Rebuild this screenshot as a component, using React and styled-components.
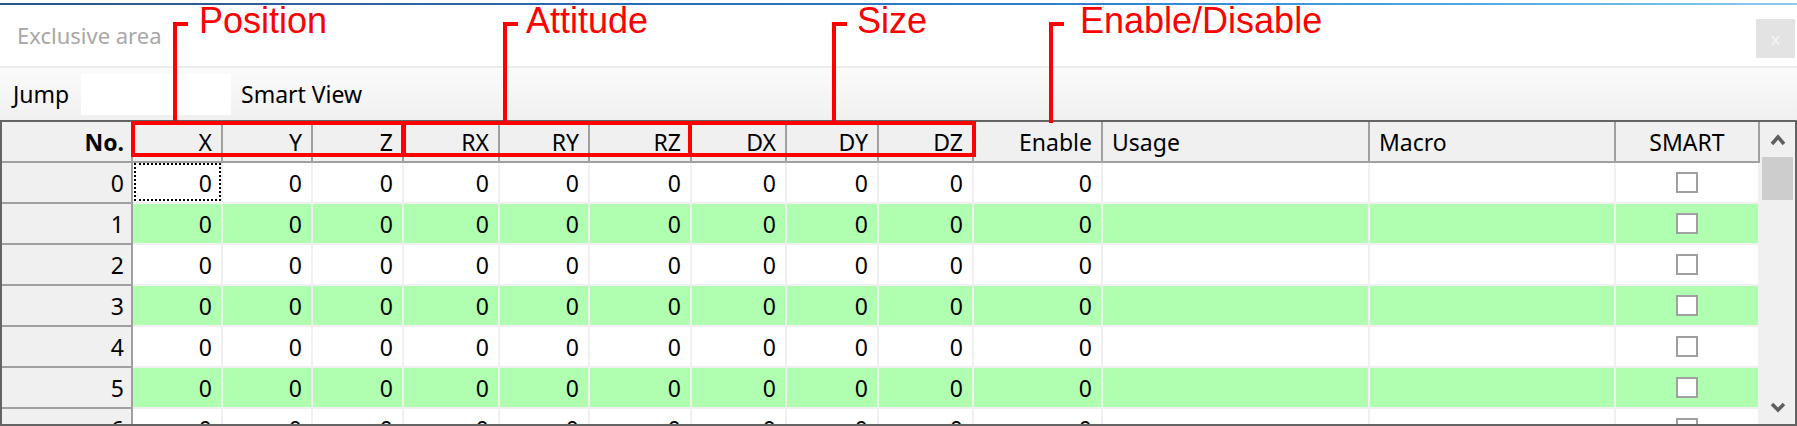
import React from 'react'
import styled, { createGlobalStyle } from 'styled-components'

const GlobalStyle = createGlobalStyle`
  html, body {
    margin: 0;
    padding: 0;
    background: #fff;
  }
  body {
    font-family: "Noto Sans", "Open Sans", sans-serif;
  }
`

const Window = styled.div`
  position: relative;
  width: 1797px;
  height: 426px;
  overflow: hidden;
  display: flex;
  flex-direction: column;
  background: #fff;
`
const TopLine = styled.div`
  height: 2px;
  margin-top: 3px;
  background: linear-gradient(90deg, #2b568a 0%, #2a6cb0 35%, #2f84cf 62%, #4aa6e2 80%, #8ccbee 100%);
`
const TitleBar = styled.div`
  height: 61px;
  display: flex;
  justify-content: space-between;
  align-items: flex-start;
`
const Title = styled.div`
  font-size: 22px;
  line-height: 30px;
  color: #a8a8a8;
  margin: 15px 0 0 17px;
`
const CloseButton = styled.div`
  width: 39px;
  height: 39px;
  margin: 14px 2px 0 0;
  background: #e3e3e3;
  color: #f6f6f6;
  font-size: 17px;
  display: flex;
  align-items: center;
  justify-content: center;
`
const Toolbar = styled.div`
  height: 54px;
  box-sizing: border-box;
  border-top: 2px solid #ececec;
  background: linear-gradient(#fbfbfb, #f0f0f0);
  display: flex;
  align-items: center;
  padding-left: 13px;
  font-size: 23px;
  color: #000;
`
const ToolLabel = styled.span`
  width: ${p => p.$w || 'auto'};
`
const JumpInput = styled.div`
  width: 150px;
  height: 41px;
  background: #fff;
  margin-right: 10px;
`
const GridFrame = styled.div`
  height: 306px;
  box-sizing: border-box;
  border: 2px solid #646464;
  display: flex;
`
const Table = styled.div`
  width: 1758px;
  display: grid;
  grid-template-columns: 131px 90px 90px 91px 96px 90px 102px 95px 92px 95px 129px 267px 246px 144px;
  grid-auto-rows: 41px;
  align-content: start;
  overflow: hidden;
  font-size: 23px;
  color: #000;
`
const HeaderCell = styled.div`
  background: #f0f0f0;
  border-right: 2px solid #a0a0a0;
  border-bottom: 2px solid #a0a0a0;
  display: flex;
  align-items: center;
  justify-content: ${p => p.$align === 'left' ? 'flex-start' : p.$align === 'center' ? 'center' : 'flex-end'};
  padding: ${p => p.$align === 'left' ? '0 0 0 9px' : p.$align === 'center' ? '0' : '0 9px 0 0'};
  font-weight: ${p => p.$bold ? 700 : 400};
  padding-right: ${p => p.$bold ? '7px' : undefined};
`
const RowHead = styled.div`
  background: #f0f0f0;
  border-right: 2px solid #a0a0a0;
  border-bottom: 2px solid #a0a0a0;
  display: flex;
  align-items: center;
  justify-content: flex-end;
  padding-right: 7px;
`
const Cell = styled.div`
  position: relative;
  background: ${p => p.$green ? '#b0ffb0' : '#fff'};
  border-right: 2px solid #f0f0f0;
  border-bottom: 2px solid #f0f0f0;
  display: flex;
  align-items: center;
  justify-content: ${p => p.$center ? 'center' : 'flex-end'};
  padding-right: ${p => p.$center ? '0' : '9px'};
  ${p => p.$focus && `
    &::after {
      content: '';
      position: absolute;
      left: 1px;
      top: 0;
      right: 0;
      bottom: 1px;
      border: 2px dotted #000;
    }
  `}
`
const CheckBox = styled.div`
  width: 22px;
  height: 21px;
  box-sizing: border-box;
  border: 2px solid #a0a0a0;
  background: #fff;
`
const ScrollBar = styled.div`
  width: 35px;
  background: #f0f0f0;
  display: flex;
  flex-direction: column;
`
const ScrollButton = styled.div`
  height: 35px;
  display: flex;
  align-items: center;
  justify-content: center;
  margin-top: ${p => p.$bottom ? 'auto' : '0'};
`
const Thumb = styled.div`
  height: 43px;
  margin: 0 2px;
  background: #cdcdcd;
`
const Note = styled.div`
  position: absolute;
  left: ${p => p.$x}px;
  top: 3px;
  font-family: "Liberation Sans", Arial, sans-serif;
  font-size: 36px;
  line-height: 36px;
  color: #ff0000;
  white-space: nowrap;
`
const Bracket = styled.div`
  position: absolute;
  left: ${p => p.$x}px;
  top: 22px;
  width: 15px;
  height: ${p => p.$h}px;
  box-sizing: border-box;
  border-left: 4px solid #ff0000;
  border-top: 4px solid #ff0000;
`
const GroupBox = styled.div`
  position: absolute;
  left: ${p => p.$x}px;
  top: 121px;
  width: ${p => p.$w}px;
  height: 36px;
  box-sizing: border-box;
  border: 4px solid #ff0000;
`

const Chevron = ({ down }) => (
  <svg width="16" height="12" viewBox="0 0 16 12">
    <polyline
      points={down ? '2,3 8,9 14,3' : '2,10 8,3 14,10'}
      fill="none"
      stroke="#5f5f5f"
      strokeWidth="3.5"
    />
  </svg>
)

const numCols = ['X', 'Y', 'Z', 'RX', 'RY', 'RZ', 'DX', 'DY', 'DZ', 'Enable']
const rows = [0, 1, 2, 3, 4, 5, 6]

const groups = [
  { label: 'Position', bx: 173, lx: 199, box: [131, 274] },
  { label: 'Attitude', bx: 503, lx: 526, box: [402, 290] },
  { label: 'Size', bx: 832, lx: 857, box: [688, 288] },
  { label: 'Enable/Disable', bx: 1049, lx: 1080 },
]

function App() {
  return (
    <Window>
      <GlobalStyle />
      <TopLine />
      <TitleBar>
        <Title>Exclusive area</Title>
        <CloseButton>x</CloseButton>
      </TitleBar>
      <Toolbar>
        <ToolLabel $w="68px">Jump</ToolLabel>
        <JumpInput />
        <ToolLabel>Smart View</ToolLabel>
      </Toolbar>
      <GridFrame>
        <Table>
          <HeaderCell $bold>No.</HeaderCell>
          {numCols.map(c => <HeaderCell key={c}>{c}</HeaderCell>)}
          <HeaderCell $align="left">Usage</HeaderCell>
          <HeaderCell $align="left">Macro</HeaderCell>
          <HeaderCell $align="center">SMART</HeaderCell>
          {rows.map(r => {
            const green = r % 2 === 1
            return (
              <React.Fragment key={r}>
                <RowHead>{r}</RowHead>
                {numCols.map((c, i) => (
                  <Cell key={c} $green={green} $focus={r === 0 && i === 0}>0</Cell>
                ))}
                <Cell $green={green} />
                <Cell $green={green} />
                <Cell $green={green} $center><CheckBox /></Cell>
              </React.Fragment>
            )
          })}
        </Table>
        <ScrollBar>
          <ScrollButton><Chevron /></ScrollButton>
          <Thumb />
          <ScrollButton $bottom><Chevron down /></ScrollButton>
        </ScrollBar>
      </GridFrame>

      {groups.map(g => (
        <React.Fragment key={g.label}>
          <Note $x={g.lx}>{g.label}</Note>
          <Bracket $x={g.bx} $h={g.box ? 100 : 101} />
          {g.box && <GroupBox $x={g.box[0]} $w={g.box[1]} />}
        </React.Fragment>
      ))}
    </Window>
  )
}

export default App
